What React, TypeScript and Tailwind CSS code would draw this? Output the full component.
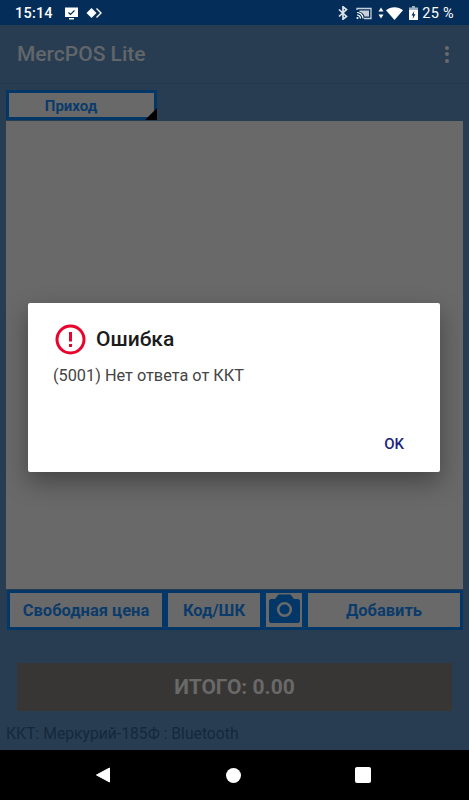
const roboto = 'font-["Roboto",sans-serif]'

function StatusBar() {
  return (
    <div className="flex h-[25px] items-center justify-between bg-[#042e59] pl-[15px] pr-[15px] pt-[1px] text-white">
      <div className="flex items-center">
        <span className="pt-[2px] text-[14.5px] font-medium leading-none tracking-[0.2px]">15:14</span>
        <svg className="ml-[11px]" width="15" height="15" viewBox="0 0 15 15">
          <path d="M1 1.5h13v9.5H1z M5 12h5v1.5H5z" fill="#fff" />
          <path d="M4.5 6.5l2 2 4-4" fill="none" stroke="#042e59" strokeWidth="1.2" />
        </svg>
        <svg className="ml-[7px]" width="16" height="12" viewBox="0 0 16 12">
          <path d="M5.5 1L10.500 6l-5 5L.5 6z" fill="#fff" />
          <path d="M10.500 1.500L15 6l-4.500 4.500" fill="none" stroke="#fff" strokeWidth="1.400" />
        </svg>
      </div>
      <div className="flex items-center">
        <svg width="10" height="14" viewBox="0 0 10 14">
          <path d="M1 3.500l7.500 7L5 13.200V.8l3.500 2.700L1 10.500" fill="none" stroke="#dfe4ea" strokeWidth="1.700" />
        </svg>
        <svg className="ml-[8px]" width="16" height="13" viewBox="0 0 16 13">
          <path d="M1 3V1.500h14v10H8" fill="none" stroke="#c7d0da" strokeWidth="1.300" />
          <path d="M3.500 3.500h9.500v6H8.500A6 6 0 0 0 3.500 5z" fill="#c7d0da" />
          <path d="M1 5.500a6 6 0 0 1 6 6M1 8a3.500 3.500 0 0 1 3.500 3.500" fill="none" stroke="#fff" strokeWidth="1.200" />
          <circle cx="1.500" cy="11" r="1.100" fill="#fff" />
        </svg>
        <svg className="ml-[6px]" width="6" height="12" viewBox="0 0 6 12">
          <path d="M3 0.500L5.500 4.500H.5zM3 11.500L.5 7.500h5z" fill="#fff" />
        </svg>
        <svg className="ml-[2px]" width="17" height="13" viewBox="0 0 17 13">
          <path d="M0 3.300C4.700-.9 12.300-.9 17 3.300L8.500 13z" fill="#fff" />
        </svg>
        <svg className="ml-[6px]" width="9" height="14" viewBox="0 0 9 14">
          <path d="M3 0h3v1.500h3V14H0V1.500h3z" fill="#9fb0c0" />
          <path d="M0 4h9v10H0z" fill="#fff" />
          <path d="M5.300 5L2.500 9.500h1.700L3.600 13l2.900-4.800H4.800z" fill="#042e59" />
        </svg>
        <span className="ml-[4px] pt-[2px] text-[14.5px] leading-none tracking-[0.3px]">25 %</span>
      </div>
    </div>
  )
}

function AppBar() {
  return (
    <div className="flex h-[59px] items-center justify-between border-b border-[#25384b] bg-[#283d52] pl-[17px] pr-[20px]">
      <span className="text-[21px] font-medium leading-none text-[#62666a]">MercPOS Lite</span>
      <div className="flex flex-col gap-[2.500px]">
        <span className="size-[4px] rounded-full bg-[#696b6d]" />
        <span className="size-[4px] rounded-full bg-[#696b6d]" />
        <span className="size-[4px] rounded-full bg-[#696b6d]" />
      </div>
    </div>
  )
}

function ToolButton({ label, className }: { label: string; className: string }) {
  return (
    <div
      className={`flex h-[40px] items-center justify-center border-[3px] border-[#033767] bg-[#696969] pt-[2px] text-[16.500px] font-bold text-[#0b3b6a] ${className}`}
    >
      {label}
    </div>
  )
}

function CameraIcon() {
  return (
    <svg width="31" height="29" viewBox="0 0 31 29" className="mb-[3px] shrink-0">
      <path
        d="M2.500 5h3.500L9.500 .5h12L25 5h3.500A2.500 2.500 0 0 1 31 7.500V26.500A2.500 2.500 0 0 1 28.500 29H2.500A2.500 2.500 0 0 1 0 26.500V7.500A2.500 2.500 0 0 1 2.500 5z"
        fill="#033767"
      />
      <circle cx="15.500" cy="15.500" r="6.300" fill="none" stroke="#696969" strokeWidth="2.600" />
    </svg>
  )
}

function Dialog() {
  return (
    <div className="absolute left-[28px] top-[303px] h-[169px] w-[412px] rounded-[2px] bg-white shadow-[0_10px_24px_rgba(0,0,0,0.35)]">
      <div className="flex items-center pl-[27px] pt-[21px]">
        <svg width="31" height="31" viewBox="0 0 31 31">
          <circle cx="15.500" cy="15.500" r="13.500" fill="none" stroke="#e8032c" strokeWidth="3" />
          <path d="M15.500 8v9.500" stroke="#e8032c" strokeWidth="3" />
          <path d="M15.500 20v3" stroke="#e8032c" strokeWidth="3" />
        </svg>
        <span className="ml-[10px] text-[21px] font-medium leading-none text-[#1b1b1b]">Ошибка</span>
      </div>
      <p className="mt-[9px] pl-[25px] text-[16.300px] leading-[24px] text-[#444444]">(5001) Нет ответа от ККТ</p>
      <div className="mt-[49px] flex justify-end pr-[36px]">
        <span className="text-[15px] font-medium leading-none text-[#1a237e]">OK</span>
      </div>
    </div>
  )
}

export default function App() {
  return (
    <div className={`relative flex h-[800px] w-[469px] flex-col overflow-hidden bg-[#283d52] ${roboto}`}>
      <StatusBar />
      <AppBar />
      <div className="flex flex-1 flex-col pl-[6px] pr-[6px]">
        <div className="relative mt-[6px] flex h-[30px] w-[151px] items-center justify-center border-[3px] border-[#033767] bg-[#696969] pr-[21px] pt-[2px]">
          <span className="text-[15px] font-bold text-[#0b3b6a]">Приход</span>
          <span className="absolute bottom-[-3px] right-[-3px] size-0 border-b-[12px] border-l-[12px] border-b-black border-l-transparent" />
        </div>
        <div className="mt-[1px] h-[468px] bg-[#696969]" />
        <div className="mt-[1px] flex pl-[1px]">
          <ToolButton label="Свободная цена" className="w-[158px]" />
          <ToolButton label="Код/ШК" className="w-[98px]" />
          <div className="flex h-[40px] w-[42px] items-center justify-center border-[3px] border-[#033767] bg-[#696969]">
            <CameraIcon />
          </div>
          <ToolButton label="Добавить" className="flex-1" />
        </div>
        <div className="mx-[11px] mt-[33px] flex h-[48px] items-center justify-center bg-[#383634] pt-[2px] text-[21px] font-bold text-[#696969]">
          ИТОГО: 0.00
        </div>
        <p className="mt-[14px] text-[15.700px] leading-[17px] text-[#14283b]">ККТ: Меркурий-185Ф : Bluetooth</p>
      </div>
      <div className="flex h-[50px] items-center bg-black pl-[95px]">
        <svg width="16" height="16" viewBox="0 0 16 16">
          <path d="M14.500 1v14L1.500 8z" fill="#fff" stroke="#fff" strokeLinejoin="round" />
        </svg>
        <span className="ml-[115px] size-[15px] rounded-full bg-white" />
        <span className="ml-[114px] size-[16px] rounded-[2px] bg-white" />
      </div>
      <Dialog />
    </div>
  )
}
